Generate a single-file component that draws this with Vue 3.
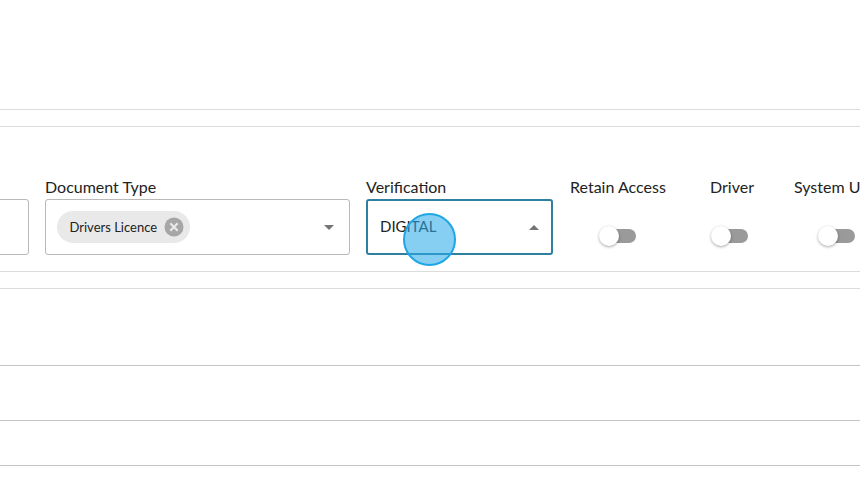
<template>
  <div class="page">
    <div class="band band-top"></div>
    <div class="band band-gap"></div>

    <div class="form-row">
      <div class="field field-cut">
        <label>&nbsp;</label>
        <div class="select"></div>
      </div>

      <div class="field field-doc">
        <label>Document Type</label>
        <div class="select">
          <span class="chip">
            Drivers Licence
            <svg class="chip-x" width="20" height="20" viewBox="0 0 20 20">
              <circle cx="10" cy="10" r="9.5" fill="#a6a6a6" />
              <path d="M6.3 6.3l7.4 7.4M13.7 6.3l-7.4 7.4" stroke="#e9e9e9" stroke-width="2.2" />
            </svg>
          </span>
          <span class="arrow"></span>
        </div>
      </div>

      <div class="field field-verify">
        <label>Verification</label>
        <div class="select focused">
          <span class="value">DIGITAL</span>
          <span class="arrow up"></span>
        </div>
      </div>

      <div class="toggles">
        <div v-for="t in toggles" :key="t.label" class="toggle-field" :style="{ width: t.width + 'px' }">
          <label>{{ t.label }}</label>
          <div class="toggle">
            <span class="track"></span>
            <span class="thumb"></span>
          </div>
        </div>
      </div>
    </div>

    <div class="band band-gap"></div>
    <div class="band band-a"></div>
    <div class="band band-b"></div>
    <div class="band band-c"></div>

    <div class="click-mark"></div>
  </div>
</template>

<script setup>
const toggles = [
  { label: 'Retain Access', width: 98 },
  { label: 'Driver', width: 42 },
  { label: 'System User', width: 88 }
]
</script>

<style>
body {
  margin: 0;
  background: #fff;
}
</style>

<style scoped>
.page {
  position: relative;
  width: 860px;
  height: 481px;
  overflow: hidden;
  background: #fff;
  font-family: Lato, "Open Sans", sans-serif;
  color: #222;
}

.band {
  box-sizing: border-box;
  border-bottom: 1px solid #dcdcdc;
}

.band-top {
  height: 110px;
}

.band-gap {
  height: 17px;
}

.band-a {
  height: 77px;
  border-bottom-color: #c4c4c4;
}

.band-b {
  height: 55px;
  border-bottom-color: #c4c4c4;
}

.band-c {
  height: 45px;
  border-bottom-color: #c4c4c4;
}

.form-row {
  box-sizing: border-box;
  height: 145px;
  padding-top: 50px;
  border-bottom: 1px solid #dcdcdc;
  display: flex;
  align-items: flex-start;
  gap: 16px;
  margin-left: -171px;
  width: 1100px;
}

.field label,
.toggle-field label {
  display: block;
  font-size: 16px;
  line-height: 20px;
  white-space: nowrap;
}

.field label {
  margin-bottom: 2px;
}

.field-cut {
  width: 200px;
}

.field-doc {
  width: 305px;
}

.field-verify {
  width: 187px;
}

.select {
  box-sizing: border-box;
  height: 56px;
  border: 1px solid #b9b9b9;
  border-radius: 3px;
  display: flex;
  align-items: center;
  padding: 0 15px 0 11px;
  background: #fff;
}

.select.focused {
  border: 2px solid #2f7f9f;
  padding: 0 12px;
}

.chip {
  display: inline-flex;
  align-items: center;
  gap: 6.5px;
  height: 32px;
  padding: 0 6px 0 12.5px;
  border-radius: 16px;
  background: #e9e9e9;
  font-size: 13px;
  color: #222;
}

.chip-x {
  display: block;
}

.value {
  font-size: 15px;
  padding-bottom: 2px;
  color: #222;
}

.arrow {
  margin-left: auto;
  width: 0;
  height: 0;
  border-left: 5px solid transparent;
  border-right: 5px solid transparent;
  border-top: 5px solid #757575;
}

.arrow.up {
  border-top: 0;
  border-bottom: 5px solid #757575;
}

.toggles {
  display: flex;
  gap: 42px;
  margin-left: 1px;
}

.toggle-field {
  flex: none;
}

.toggle {
  position: relative;
  width: 37px;
  height: 21px;
  margin-top: 29px;
  margin-left: calc(50% - 20px);
}

.track {
  position: absolute;
  top: 3px;
  left: 2px;
  width: 35px;
  height: 14px;
  border-radius: 7px;
  background: #9a9a9a;
}

.thumb {
  position: absolute;
  top: 0;
  left: 0;
  width: 20px;
  height: 20px;
  border-radius: 50%;
  background: #fff;
  box-shadow: 0 1px 3px rgba(0, 0, 0, 0.35);
}

.click-mark {
  position: absolute;
  left: 403px;
  top: 213px;
  box-sizing: border-box;
  width: 53px;
  height: 53px;
  border-radius: 50%;
  border: 2.5px solid #1fa6e4;
  background: rgba(48, 170, 235, 0.58);
}
</style>
